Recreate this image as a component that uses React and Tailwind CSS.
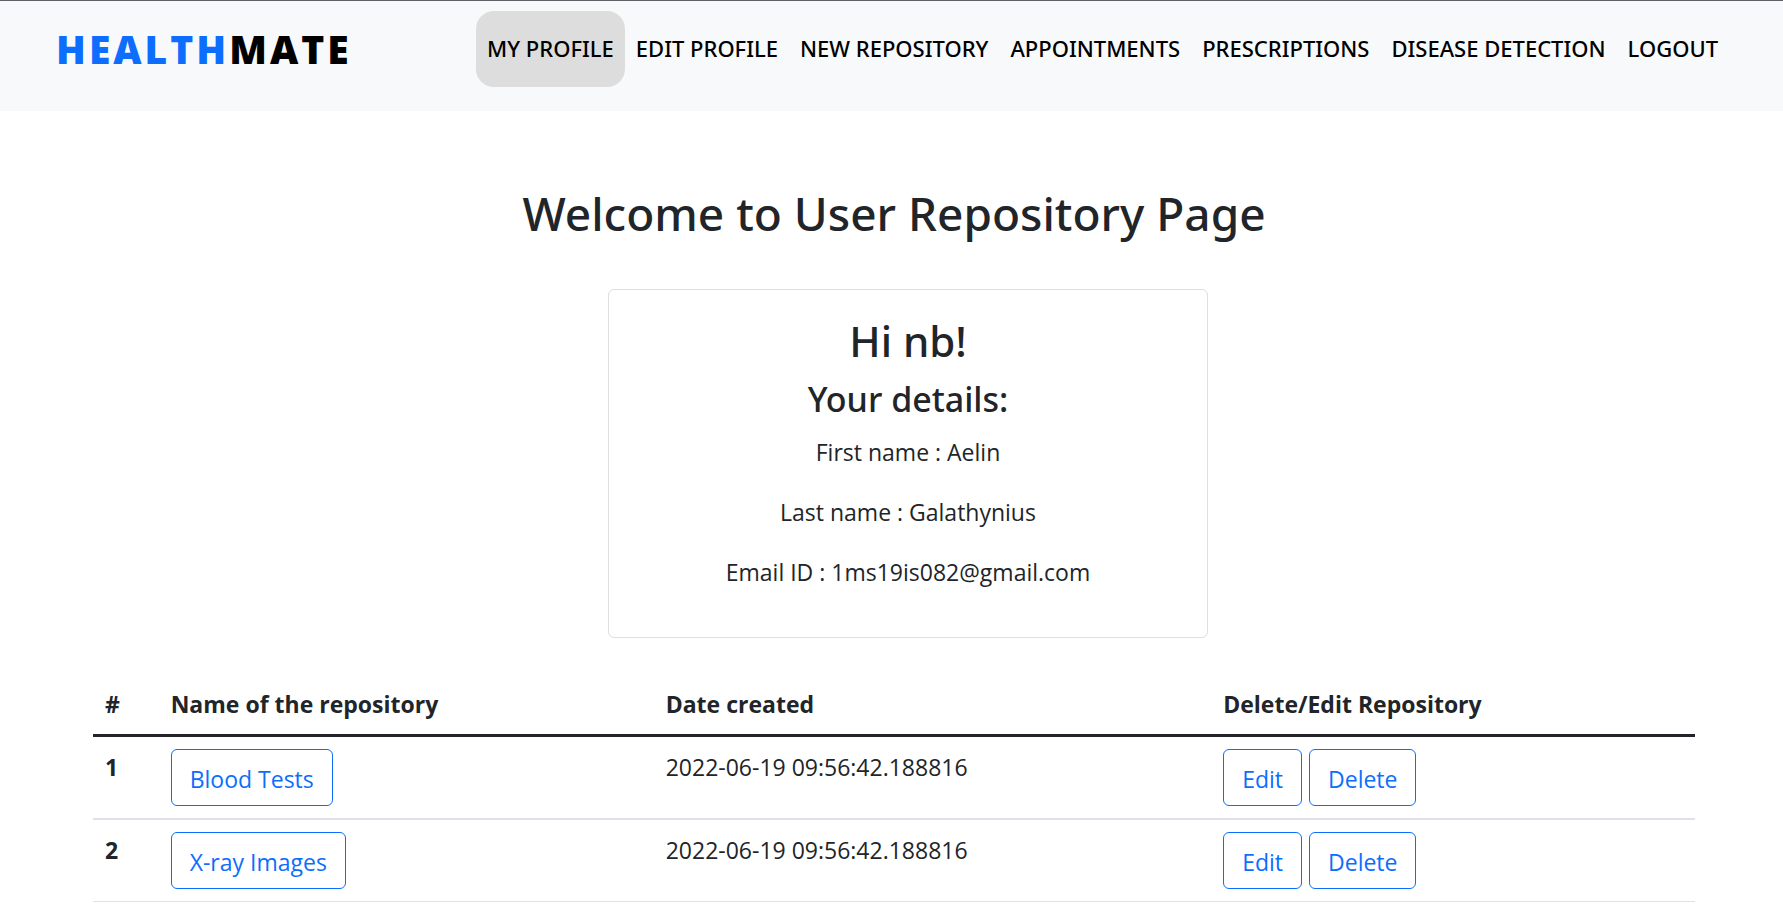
const navItems = [
  'My Profile',
  'Edit Profile',
  'New Repository',
  'Appointments',
  'Prescriptions',
  'Disease Detection',
  'Logout',
];

const details = [
  ['First name', 'Aelin'],
  ['Last name', 'Galathynius'],
  ['Email ID', '1ms19is082@gmail.com'],
];

const repositories = [
  { id: 1, name: 'Blood Tests', created: '2022-06-19 09:56:42.188816' },
  { id: 2, name: 'X-ray Images', created: '2022-06-19 09:56:42.188816' },
];

function OutlineButton({ children }) {
  return (
    <button
      type="button"
      className="rounded-md border border-[#0d6efd] px-[18px] pt-[11px] pb-2 leading-9 text-[#0d6efd] hover:bg-[#0d6efd] hover:text-white"
    >
      {children}
    </button>
  );
}

function Header() {
  return (
    <header className="flex items-start justify-between border-t border-[#5f5f66] bg-[#f8f9fb] pt-[10px] pr-[54px] pb-6 pl-14">
      <a href="#" className="pt-[11px] text-[39px] leading-[54px] font-extrabold tracking-[3px] text-black uppercase">
        <span className="text-[#0d6efd]">Health</span>Mate
      </a>
      <nav className="flex font-['Noto_Sans',sans-serif]">
        {navItems.map((item, i) => (
          <a
            key={item}
            href="#"
            className={
              i === 0
                ? 'rounded-[18px] bg-[#dddddd] px-[11px] pt-[19px] pb-[21px] text-[22px] leading-9 font-medium whitespace-nowrap text-black uppercase'
                : 'rounded-[18px] px-[11px] pt-[19px] pb-[21px] text-[22px] leading-9 font-medium whitespace-nowrap text-black uppercase'
            }
          >
            {item}
          </a>
        ))}
      </nav>
    </header>
  );
}

export default function App() {
  return (
    <div className="min-h-screen bg-white font-['Open_Sans','Noto_Sans',sans-serif] text-[23px] text-[#212529]">
      <Header />
      <main className="pt-[73px] pr-[88px] pl-[93px]">
        <h1 className="text-center font-['Noto_Sans',sans-serif] text-[46px] leading-[58px] font-medium">
          Welcome to User Repository Page
        </h1>
        <div className="mt-[47px] pl-7">
          <section className="mx-auto max-w-[600px] rounded-md border border-[#dfdfdf] px-6 pt-6 pb-[47px] text-center">
            <h2 className="font-['Noto_Sans',sans-serif] text-[42px] leading-[54px] font-medium">Hi nb!</h2>
            <h3 className="mt-2 font-['Noto_Sans',sans-serif] text-[34px] leading-[46px] font-medium">
              Your details:
            </h3>
            <div className="mt-3 flex flex-col gap-6 leading-9">
              {details.map(([label, value]) => (
                <p key={label}>
                  {label} : {value}
                </p>
              ))}
            </div>
          </section>
        </div>
        <table className="mt-9 w-full table-fixed border-collapse text-left leading-9">
          <colgroup>
            <col className="w-[4.1%]" />
            <col className="w-[30.9%]" />
            <col className="w-[34.8%]" />
            <col />
          </colgroup>
          <thead>
            <tr className="border-b-3 border-[#212529]">
              {['#', 'Name of the repository', 'Date created', 'Delete/Edit Repository'].map((title) => (
                <th key={title} scope="col" className="p-3 font-bold">
                  {title}
                </th>
              ))}
            </tr>
          </thead>
          <tbody>
            {repositories.map((repo) => (
              <tr key={repo.id} className="border-b-2 border-[#dee2e6] align-top last:border-b">
                <th scope="row" className="p-3 font-bold">
                  {repo.id}
                </th>
                <td className="p-3">
                  <div className="flex">
                    <OutlineButton>{repo.name}</OutlineButton>
                  </div>
                </td>
                <td className="p-3">{repo.created}</td>
                <td className="p-3">
                  <div className="flex gap-[7px]">
                    <OutlineButton>Edit</OutlineButton>
                    <OutlineButton>Delete</OutlineButton>
                  </div>
                </td>
              </tr>
            ))}
          </tbody>
        </table>
      </main>
    </div>
  );
}
